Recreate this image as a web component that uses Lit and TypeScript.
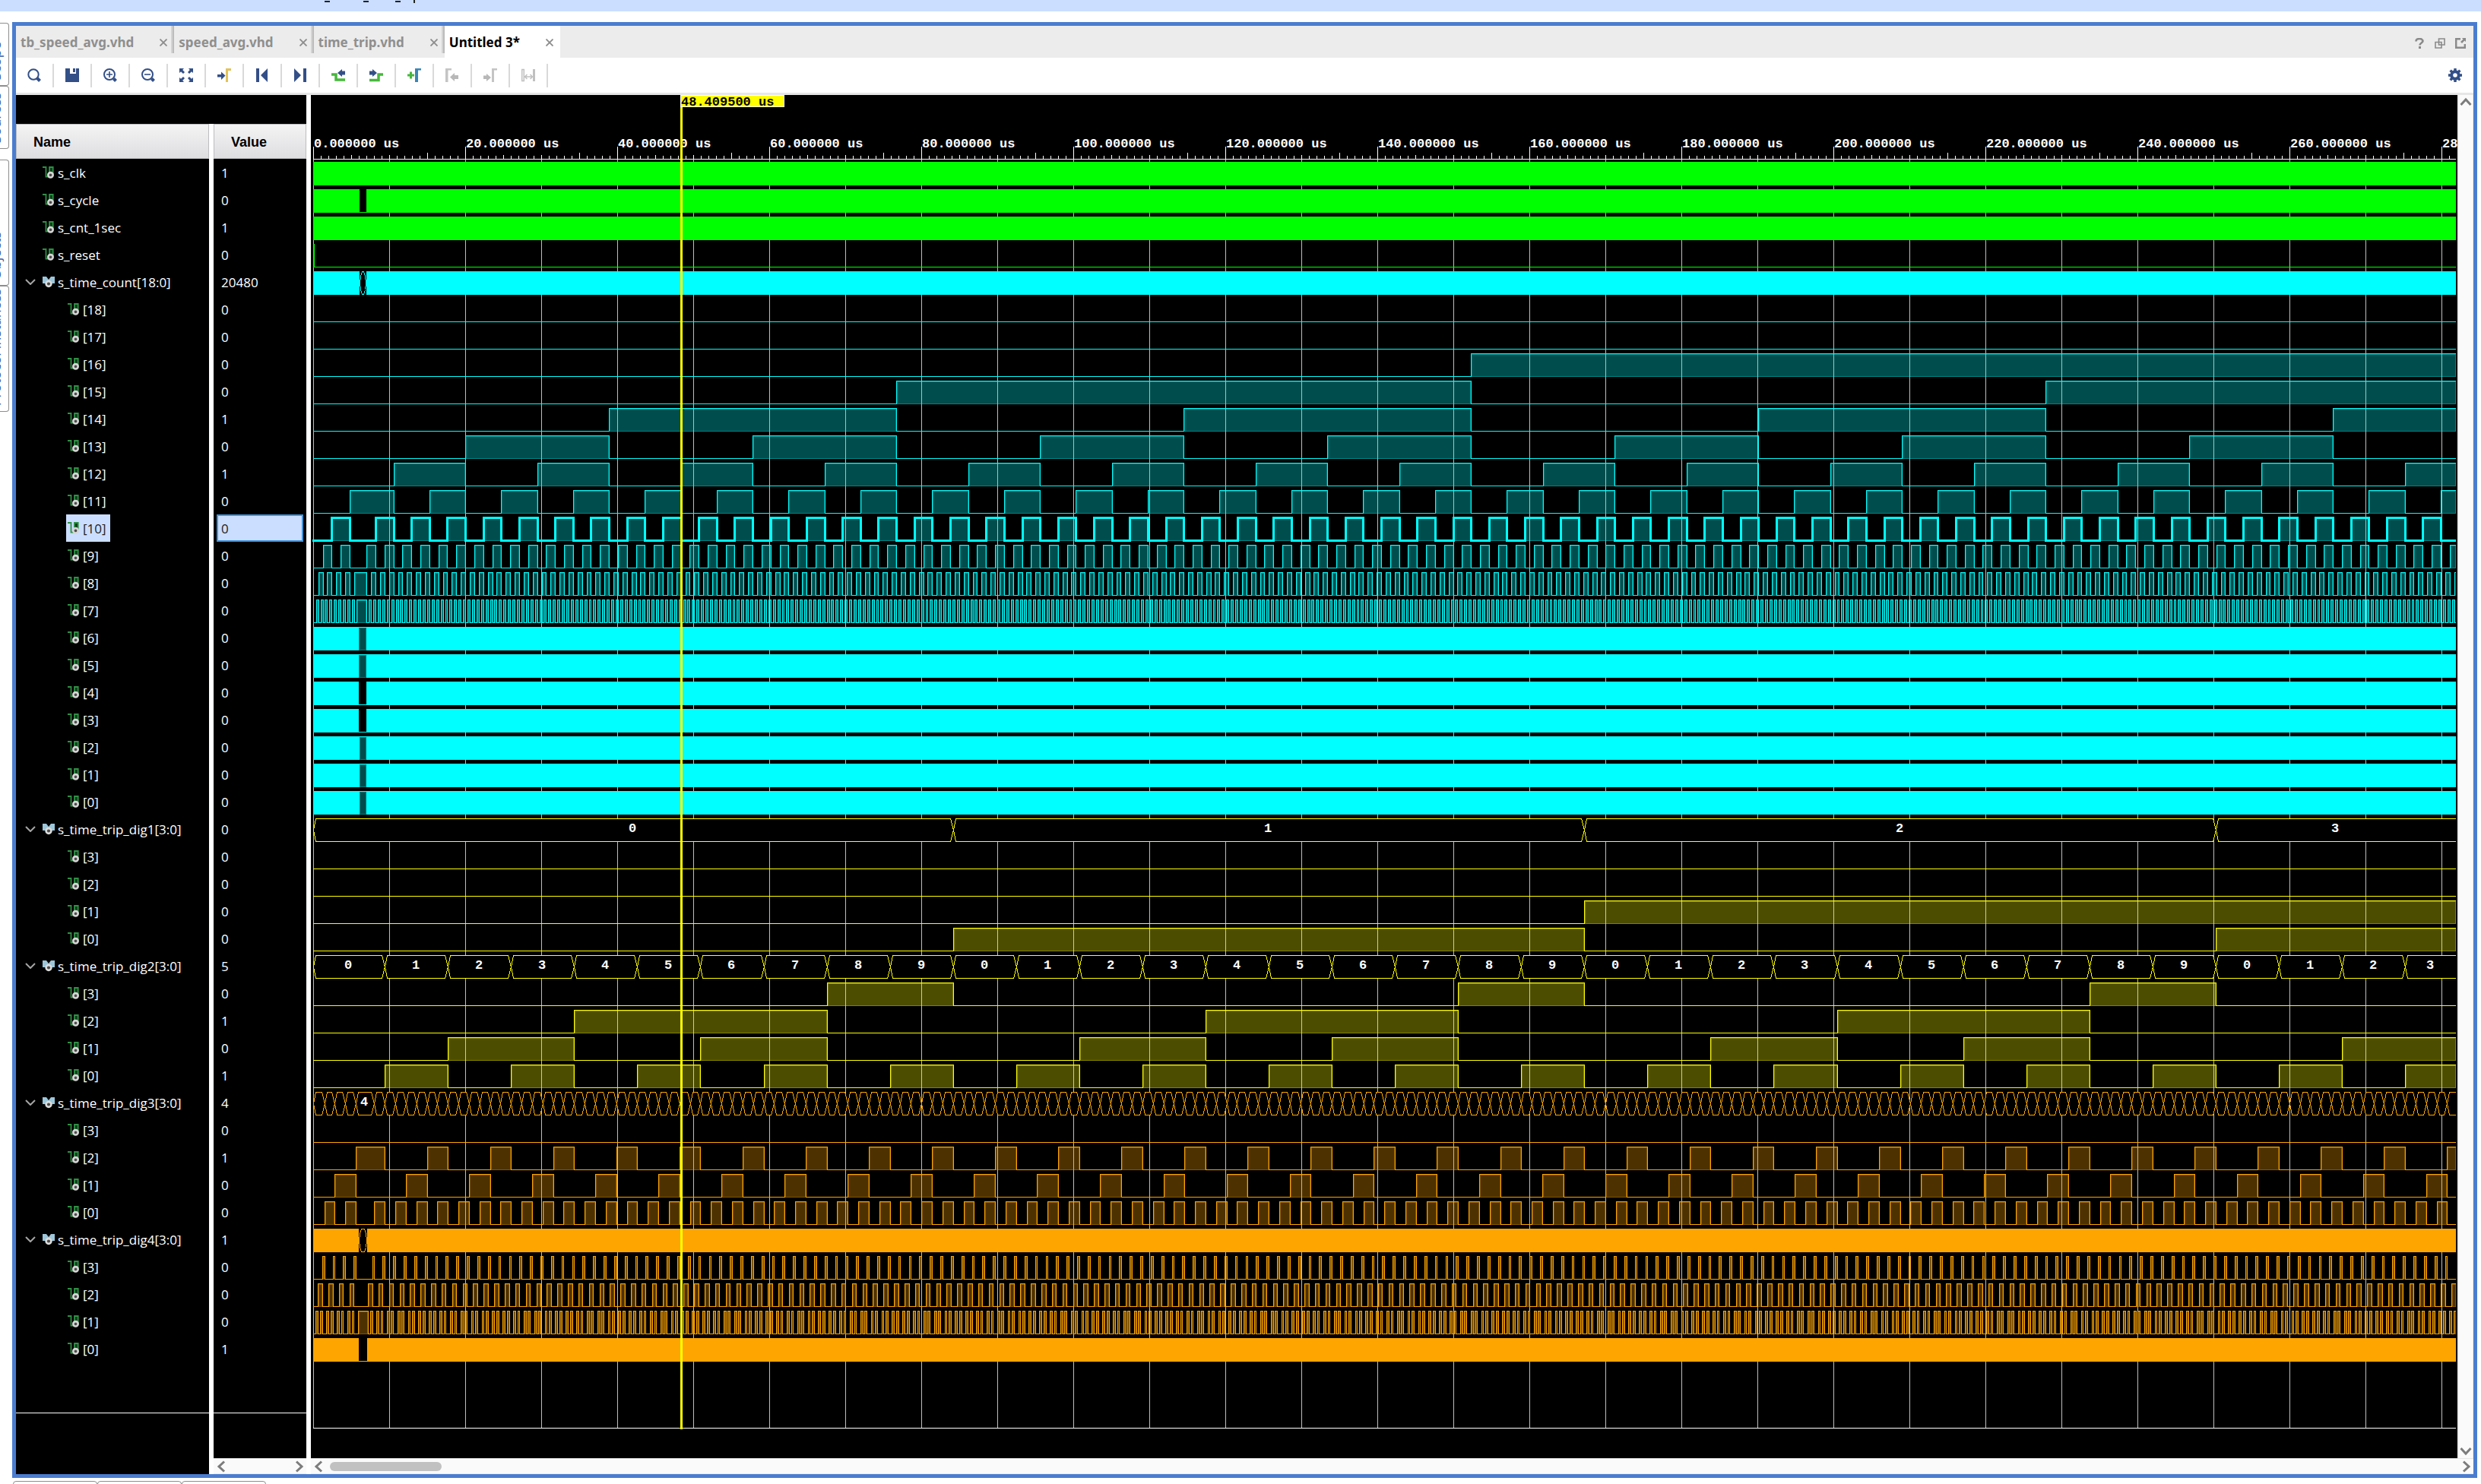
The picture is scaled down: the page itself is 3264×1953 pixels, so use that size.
import { LitElement, html, svg, css, nothing } from "lit";
import { customElement, state } from "lit/decorators.js";
import { classMap } from "lit/directives/class-map.js";

const GREEN = "#00ff00";
const CYAN = "#00ffff";
const YELLOW = "#ffff00";
const ORANGE = "#ffa500";

const ROW = 36;
const AXIS_Y = 84;
const PX_PER_US = 10;
const CURSOR_US = 48.4095;

/* The counter runs evenly except for one hold early in the simulation. */
const PX_PER_COUNT = 0.023072;
const HOLD_COUNT = 2535;
const xOf = (c: number) => (c <= HOLD_COUNT ? 1.2 : 11.6) + c * PX_PER_COUNT;

type Gap = { from: number; to: number; kind: "low" | "high" | "bus" };
type Wave =
  | { kind: "dense"; gap?: Gap }
  | { kind: "pulse"; step: number; high: (n: number) => boolean }
  | { kind: "reset" }
  | { kind: "bus"; step: number; base: number };

interface Signal {
  name: string;
  value: string;
  color: string;
  wave: Wave;
  child?: boolean;
  group?: boolean;
  selected?: boolean;
}

const gap = (from: number, to: number, kind: Gap["kind"]): Gap => ({ from, to, kind });
const bitOf = (step: number, base: number, bit: number): Wave => ({
  kind: "pulse",
  step,
  high: (n) => (((n % base) >> bit) & 1) === 1,
});

const CURSOR_COUNT = 20480;
const signals: Signal[] = [
  { name: "s_clk", value: "1", color: GREEN, wave: { kind: "dense" } },
  { name: "s_cycle", value: "0", color: GREEN, wave: { kind: "dense", gap: gap(61, 70, "low") } },
  { name: "s_cnt_1sec", value: "1", color: GREEN, wave: { kind: "dense" } },
  { name: "s_reset", value: "0", color: GREEN, wave: { kind: "reset" } },
  { name: "s_time_count[18:0]", value: "20480", color: CYAN, group: true, wave: { kind: "dense", gap: gap(61, 70, "bus") } },
];
for (let b = 18; b >= 0; b--) {
  const wave: Wave =
    b > 6
      ? { kind: "pulse", step: 2 ** b, high: (n) => n % 2 === 1 }
      : { kind: "dense", gap: gap(b > 2 ? 60 : 61, 70, b === 4 || b === 3 ? "low" : "high") };
  signals.push({
    name: `[${b}]`,
    value: String((CURSOR_COUNT >> b) & 1),
    color: CYAN,
    child: true,
    selected: b === 10,
    wave,
  });
}
const digits = [
  { id: 1, value: 0, color: YELLOW, step: 36000, base: 10 },
  { id: 2, value: 5, color: YELLOW, step: 3600, base: 10 },
  { id: 3, value: 4, color: ORANGE, step: 600, base: 6 },
  { id: 4, value: 1, color: ORANGE, step: 60, base: 10 },
];
for (const d of digits) {
  signals.push({
    name: `s_time_trip_dig${d.id}[3:0]`,
    value: String(d.value),
    color: d.color,
    group: true,
    wave: d.id === 4 ? { kind: "dense", gap: gap(60, 71, "bus") } : { kind: "bus", step: d.step, base: d.base },
  });
  for (let b = 3; b >= 0; b--) {
    signals.push({
      name: `[${b}]`,
      value: String((d.value >> b) & 1),
      color: d.color,
      child: true,
      wave: d.id === 4 && b === 0 ? { kind: "dense", gap: gap(60, 71, "low") } : bitOf(d.step, d.base, b),
    });
  }
}

const NAVY = "#334f87";
const icons = {
  search: svg`<circle cx="8" cy="8" r="6.7" fill="none" stroke=${NAVY} stroke-width="2"/><path d="M13 13l3.5 3.5" stroke=${NAVY} stroke-width="4"/>`,
  save: svg`<path d="M0 0h6v7h8V0h4v18H0z" fill=${NAVY}/><path d="M10 0h3v5h-3z" fill=${NAVY}/>`,
  zoomIn: svg`<circle cx="8" cy="8" r="7" fill="none" stroke=${NAVY} stroke-width="2"/><path d="M13.500 13.500l3 3" stroke=${NAVY} stroke-width="4"/><path d="M4 8h8M8 4v8" stroke=${NAVY} stroke-width="1.600"/>`,
  zoomOut: svg`<circle cx="8" cy="8" r="7" fill="none" stroke=${NAVY} stroke-width="2"/><path d="M13.500 13.500l3 3" stroke=${NAVY} stroke-width="4"/><path d="M4 8h8" stroke=${NAVY} stroke-width="1.600"/>`,
  fit: svg`<path d="M0 0h6L4.200 2 7 5 5 7 2 4.200 0 6zM18 0v6l-2-1.800L13 7l-2-2 2.800-3L12 0zM0 18v-6l2 1.800L5 11l2 2-2.800 3L6 18zM18 18h-6l1.800-2L11 13l2-2 3 2.800 2-1.800z" fill=${NAVY}/>`,
  goCursor: svg`<path d="M0 8h5V4.500l5.500 5L5 15v-3.500H0z" fill=${NAVY}/><path d="M11 18V0h7v3h-4v15z" fill="#e2c35c"/>`,
  first: svg`<path d="M1 0h4v18H1zM16 0v18L7 9z" fill=${NAVY}/>`,
  last: svg`<path d="M13 0h4v18h-4zM1 0v18l9-9z" fill=${NAVY}/>`,
  prevEdge: svg`<path d="M0 8h6v7h12" fill="none" stroke="#47b83c" stroke-width="3.500"/><path d="M18 3.500h-4V1L8 6l6 5V8.500h4z" fill=${NAVY}/>`,
  nextEdge: svg`<path d="M0 15.500h12V8h6" fill="none" stroke="#47b83c" stroke-width="3.500"/><path d="M0 3.500h4V1l6 5-6 5V8.500H0z" fill=${NAVY}/>`,
  addMarker: svg`<path d="M0 9h9M4.500 4.500v9" stroke="#47b83c" stroke-width="3"/><path d="M10 18V0h8v2.500h-4V18z" fill="#3a86b7"/>`,
  prevMarker: svg`<path d="M0 18V0h8v2.500H3.500V18z" fill="#c4c4c4"/><path d="M17 9h-5V6l-6 5.500 6 5.500v-3h5z" fill="#b8b8b8"/>`,
  nextMarker: svg`<path d="M11 18V0h7v2.500h-4V18z" fill="#c4c4c4"/><path d="M0 9.500h4V7l6 5-6 5v-3H0z" fill="#b8b8b8"/>`,
  swap: svg`<path d="M.7 1.500h2.600v15H.7zM5 11h9M7.500 8L4.500 11l3 3M11.500 8l3 3-3 3" fill="none" stroke="#c0c0c0" stroke-width="1.500"/><path d="M15 1h3v16h-3z" fill="#c0c0c0"/>`,
};

const tools: { label: string; icon: unknown; disabled?: boolean }[] = [
  { label: "Find", icon: icons.search },
  { label: "Save", icon: icons.save },
  { label: "Zoom in", icon: icons.zoomIn },
  { label: "Zoom out", icon: icons.zoomOut },
  { label: "Zoom fit", icon: icons.fit },
  { label: "Go to cursor", icon: icons.goCursor },
  { label: "Go to start", icon: icons.first },
  { label: "Go to end", icon: icons.last },
  { label: "Previous transition", icon: icons.prevEdge },
  { label: "Next transition", icon: icons.nextEdge },
  { label: "Add marker", icon: icons.addMarker },
  { label: "Previous marker", icon: icons.prevMarker, disabled: true },
  { label: "Next marker", icon: icons.nextMarker, disabled: true },
  { label: "Swap cursors", icon: icons.swap, disabled: true },
];

const arrow = (d: string) => html`<svg width="16" height="16" viewBox="0 0 16 16"><path d=${d} fill="none" stroke="#7c7c7c" stroke-width="3"/></svg>`;
const LEFT = "M11 1.500L4 8l7 6.500";
const RIGHT = "M6 1.500L13 8l-7 6.500";
const UP = "M1.500 12L8 5l6.500 7";
const DOWN = "M1.500 4L8 11l6.500-7";

@customElement("wave-canvas")
export class WaveCanvas extends LitElement {
  @state() private paneWidth = 2824;
  private observer?: ResizeObserver;

  static styles = css`
    :host {
      display: block;
      overflow: hidden;
      background: #000;
    }
    svg {
      display: block;
      width: 100%;
      height: 1793px;
    }
    text {
      font: bold 17px "Liberation Mono", monospace;
      fill: #fff;
    }
    text.on-cursor {
      fill: #000;
    }
  `;

  connectedCallback() {
    super.connectedCallback();
    this.observer = new ResizeObserver(([entry]) => {
      this.paneWidth = Math.round(entry.contentRect.width);
    });
    this.observer.observe(this);
  }

  disconnectedCallback() {
    super.disconnectedCallback();
    this.observer?.disconnect();
  }

  private drawDense(y: number, color: string, w: number, g?: Gap) {
    const top = y + 4;
    let hole: unknown = nothing;
    if (g) {
      const gw = g.to - g.from;
      const l = g.from + 0.5;
      const r = g.to - 0.5;
      if (g.kind === "low") {
        hole = svg`<rect x=${g.from} y=${top} width=${gw} height="30" fill="#000"/>`;
      } else if (g.kind === "high") {
        hole = svg`<rect x=${g.from} y=${top + 1} width=${gw} height="30" fill="#008080"/>
          <rect x=${g.from + 1} y=${top + 2} width=${gw - 2} height="28" fill="#004c4c"/>`;
      } else {
        hole = svg`<rect x=${g.from} y=${top} width=${gw} height="31" fill="#000"/>
          <path d="M${l} ${top + 15.5}L${l + 1} ${top + 6.5}L${l + 3} ${top + 0.5}H${r - 3}L${r - 1} ${top + 6.5}L${r} ${top + 15.5}L${r - 1} ${top + 24.5}L${r - 3} ${top + 30.5}H${l + 3}L${l + 1} ${top + 24.5}z" fill="none" stroke=${color}/>`;
      }
    }
    return svg`<rect x="0" y=${top} width=${w} height="31" fill=${color}/>${hole}`;
  }

  private drawPulse(y: number, color: string, w: number, step: number, high: (n: number) => boolean, selected: boolean) {
    const lo = y + 34.5;
    const hi = y + 4.5;
    let line = `M${selected ? -1 : 0} ${lo}`;
    let fill = "";
    let edge = "";
    let level = false;
    let rise = 0;
    const close = (end: number) => {
      const width = end - rise - 1;
      if (width > 0) fill += `M${rise + 1} ${y + 5}h${width}v30h${-width}z`;
      if (width > 1) edge += `M${rise + 1.5} ${y + 5.5}h${width - 1}v29h${1 - width}z`;
    };
    for (let n = 1; xOf(n * step) < w; n++) {
      const next = high(n);
      if (next === level) continue;
      const x = Math.floor(xOf(n * step));
      line += `H${x + 0.5}V${next ? hi : lo}`;
      if (next) rise = x;
      else close(x);
      level = next;
    }
    line += `H${w}`;
    if (level) close(w);
    return svg`<path d=${fill} fill=${color} fill-opacity="0.3"/>
      <path d=${edge} fill="none" stroke=${color} stroke-opacity="0.3"/>
      <path d=${line} fill="none" stroke=${color} stroke-width=${selected ? 3 : 1}/>`;
  }

  private drawBus(y: number, color: string, w: number, step: number, base: number) {
    let d = "";
    const labels: unknown[] = [];
    for (let n = 0; n === 0 || xOf(n * step) < w; n++) {
      const a = n === 0 ? 0 : Math.floor(xOf(n * step));
      const b = Math.floor(xOf((n + 1) * step));
      const end = b >= w ? w + 8 : b;
      d += `M${a + 0.5} ${y + 19.5}L${a + 3.5} ${y + 4.5}H${end - 3.5}L${end + 0.5} ${y + 19.5}L${end - 3.5} ${y + 34.5}H${a + 3.5}z`;
      const shown = Math.min(b, w);
      if (shown - a > 20) {
        labels.push(svg`<text x=${Math.round((a + shown) / 2) - 1} y=${y + 22} text-anchor="middle">${n % base}</text>`);
      }
    }
    return svg`<path d=${d} fill="#000" stroke=${color}/>${labels}`;
  }

  private drawSignal(s: Signal, i: number, w: number) {
    const y = AXIS_Y + i * ROW;
    const k = s.wave;
    if (k.kind === "dense") return this.drawDense(y, s.color, w, k.gap);
    if (k.kind === "bus") return this.drawBus(y, s.color, w, k.step, k.base);
    if (k.kind === "reset") return svg`<path d="M1 ${y + 4}V${y + 34}" stroke=${s.color} stroke-width="2"/><path d="M0 ${y + 34.5}H${w}" stroke=${s.color}/>`;
    return this.drawPulse(y, s.color, w, k.step, k.high, !!s.selected);
  }

  render() {
    const w = this.paneWidth - 5;
    const bottom = 1754;
    let grid = "";
    let ticks = "";
    const labels: unknown[] = [];
    for (let x = 0; x < w; x += 10) {
      const phase = x % 200;
      const len = phase === 0 ? 16 : phase === 150 ? 8 : phase % 50 === 0 ? 5 : 4;
      ticks += `M${x + 0.5} ${AXIS_Y}v${-len}`;
      if (x % 100 === 0) grid += `M${x + 0.5} ${AXIS_Y + 1}V${bottom}`;
      if (phase === 0) labels.push(svg`<text x=${x + 1} y="69">${(x / PX_PER_US).toFixed(6)} us</text>`);
    }
    const cursor = Math.floor(CURSOR_US * PX_PER_US);
    return html`
      <svg>
        <defs><clipPath id="pane"><rect x="-2" y="0" width=${w + 2} height="1793"/></clipPath></defs>
        <g transform="translate(3 0)" shape-rendering="crispEdges">
          <path d=${grid} stroke="#bebebe"/>
          <path d=${ticks} stroke="#fff"/>
          <path d="M0 ${AXIS_Y + 0.5}H${w}M0 ${bottom + 0.5}H${w}" stroke="#fff"/>
          ${labels}
          <g clip-path="url(#pane)">${signals.map((s, i) => this.drawSignal(s, i, w))}</g>
          <rect x=${cursor - 1} y="0" width="3" height="1756" fill="#ffff00"/>
          <rect x=${cursor - 0.5} y="0.5" width="136" height="15" fill="#ffff00" stroke="#fff"/>
          <text class="on-cursor" x=${cursor} y="14">${CURSOR_US.toFixed(6)} us</text>
        </g>
      </svg>
    `;
  }
}

@customElement("app-root")
export class AppRoot extends LitElement {
  static styles = css`
    :host {
      display: flex;
      flex-direction: column;
      min-height: 100vh;
      box-sizing: border-box;
      overflow: hidden;
      background: #fff;
      color: #000;
      font: 18px/24px "Open Sans", "Noto Sans", sans-serif;
    }
    * {
      box-sizing: border-box;
    }
    button {
      margin: 0;
      padding: 0;
      border: 0;
      background: none;
      font: inherit;
      color: inherit;
      display: flex;
      align-items: center;
      justify-content: center;
    }
    svg {
      display: block;
      flex: none;
    }
    .title-strip {
      height: 15px;
      margin-bottom: 14px;
      background: #cbdeff;
    }
    .body {
      flex: 1;
      display: flex;
      padding-right: 5px;
    }
    .side {
      width: 16px;
      flex: none;
      display: flex;
      flex-direction: column;
      padding-top: 1px;
    }
    .side-tab {
      width: 12px;
      height: 83px;
      padding-bottom: 7px;
      border: 1px solid #8e8e8e;
      border-left: 0;
      border-radius: 0 4px 4px 0;
      align-items: flex-end;
      justify-content: flex-end;
      overflow: hidden;
      color: #3f5fa6;
    }
    .side-tab.spaced {
      margin-top: 14px;
    }
    .side-tab.long {
      height: 166px;
    }
    .side-tab span {
      writing-mode: vertical-rl;
      transform: rotate(180deg);
      margin-right: 5px;
      white-space: nowrap;
    }
    .window {
      flex: 1;
      min-width: 0;
      display: flex;
      flex-direction: column;
      border: 5px solid #4a7dcf;
    }
    .tabs {
      display: flex;
      height: 42px;
      background: #ececec;
    }
    .tab {
      display: flex;
      align-items: center;
      justify-content: space-between;
      gap: 34px;
      padding: 2px 5px 0 6px;
      color: #8f8f8f;
    }
    .tab-wrap {
      display: flex;
    }
    .tab-wrap::after {
      content: "";
      width: 4px;
      height: 36px;
      background: linear-gradient(90deg, #d4d4d4 50%, #bcbcbc 50%);
    }
    .tab-wrap.active::after {
      display: none;
    }
    .active .tab {
      padding-right: 9px;
      background: #fff;
      color: #000;
    }
    .tab-name {
      font: bold 17px/24px "Noto Sans", "Open Sans", sans-serif;
    }
    .window-tools {
      margin-left: auto;
      display: flex;
      align-items: center;
      gap: 13px;
      padding: 4px 10px 0 0;
    }
    .toolbar {
      display: flex;
      align-items: center;
      height: 49px;
      border-bottom: 3px solid #e6e6e6;
      background: #fff;
    }
    .tool {
      width: 50px;
      height: 31px;
      border-right: 2px solid #d9d9d9;
    }
    .gear {
      margin: 0 15px 0 auto;
    }
    .panes {
      flex: 1;
      display: flex;
      background: #fff;
    }
    .list {
      width: 382px;
      flex: none;
      display: flex;
      flex-direction: column;
      margin-right: 6px;
      color: #fff;
    }
    .band {
      height: 38px;
      background: #000;
    }
    table {
      width: 382px;
      table-layout: fixed;
      border-collapse: separate;
      border-spacing: 0;
    }
    .name-col {
      width: 254px;
    }
    th {
      height: 46px;
      padding: 2px 0 0 22px;
      border: 1px solid #bdbdc0;
      background: linear-gradient(#f4f4f4, #dedee1);
      color: #000;
      text-align: left;
      font: bold 18px/24px "Liberation Sans", Arial, sans-serif;
    }
    .cols {
      display: grid;
      grid-template-columns: 254px 122px;
      column-gap: 6px;
    }
    td {
      height: 36px;
      padding: 0;
      background: #000;
    }
    .split {
      width: 6px;
      background: #fff;
    }
    .item {
      display: flex;
      align-items: center;
      height: 36px;
    }
    .twist {
      width: 35px;
      height: 36px;
      padding-left: 2px;
    }
    .tag {
      display: flex;
      align-items: center;
      gap: 4px;
      height: 36px;
    }
    .plain {
      padding-left: 35px;
    }
    .child {
      padding-left: 66px;
    }
    .child .tag {
      padding: 0 5px 0 2px;
    }
    .child.selected .tag {
      background: #cbdeff;
      color: #222;
    }
    .label,
    .value {
      padding-top: 2px;
      font: 17px/24px "Open Sans", "Noto Sans", sans-serif;
      white-space: nowrap;
    }
    .value {
      display: flex;
      align-items: center;
      height: 36px;
      margin: 0 4px;
      padding-left: 6px;
    }
    .value.selected {
      padding-left: 4px;
      border: 2px solid #4394d8;
      background: #cbdeff;
      color: #222;
    }
    .rest {
      height: 67px;
    }
    .rest > div {
      background: #000;
      border-bottom: 1px solid #fff;
    }
    .fill {
      flex: 1;
    }
    .fill > div {
      background: #000;
    }
    .foot {
      height: 21px;
    }
    .black {
      background: #000;
    }
    .hbar {
      display: flex;
      align-items: center;
      height: 21px;
      padding: 0 2px;
      background: #fafafa;
      border-top: 1px solid #e6e6e6;
      border-bottom: 1px solid #ececec;
    }
    .hbar button,
    .vbar button {
      width: 18px;
      height: 18px;
    }
    .hbar .end {
      margin-left: auto;
    }
    .thumb {
      width: 147px;
      height: 12px;
      margin-left: 5px;
      border-radius: 6px;
      background: #c1c1c1;
    }
    .scope {
      flex: 1;
      min-width: 0;
      display: flex;
      flex-direction: column;
    }
    .view {
      flex: 1;
      display: flex;
    }
    wave-canvas {
      flex: 1;
      min-width: 0;
    }
    .vbar {
      width: 21px;
      flex: none;
      display: flex;
      flex-direction: column;
      align-items: center;
      justify-content: space-between;
      background: #fafafa;
      border-left: 2px solid #ececec;
      border-right: 1px solid #ececec;
    }
    .bottom-tabs {
      display: flex;
      height: 8px;
      padding: 4px 0 0 17px;
      overflow: hidden;
    }
    .bottom-tab {
      width: 111px;
      height: 24px;
      border: 1px solid #8e8e8e;
      border-radius: 4px 4px 0 0;
    }
  `;

  private bitIcon = () => html`<svg width="16" height="18" viewBox="0 0 16 18" aria-hidden="true">
    <path d="M8.500 2h5v9h-5z" fill="#0f3d1a"/>
    <path d="M0 2h4.500v12.500H9V2h4.700v9" fill="none" stroke="#2f9044" stroke-width="1.800"/>
    <circle cx="10.500" cy="12.300" r="3.200" fill="#4c4c4c" stroke="#d6d6d6" stroke-width="2.600"/>
  </svg>`;

  private groupIcon = () => html`<svg width="16" height="18" viewBox="0 0 16 18" aria-hidden="true">
    <path d="M0 2h5l3 4 3-4h5v9h-5l-3 2-3-2H0z" fill="#9cc6da"/>
    <circle cx="8" cy="11.500" r="3.400" fill="#4c4c4c" stroke="#dcdcdc" stroke-width="2.600"/>
  </svg>`;

  private row(s: Signal) {
    const cls = { item: true, child: !!s.child, plain: !s.child && !s.group, selected: !!s.selected };
    return html`<tr>
      <td>
        <div class=${classMap(cls)}>
          ${s.group
            ? html`<button class="twist" aria-label="Collapse" aria-expanded="true">
                <svg width="14" height="8" viewBox="0 0 14 8"><path d="M1 1l6 6 6-6" fill="none" stroke="#a6a6a6" stroke-width="2"/></svg>
              </button>`
            : nothing}
          <span class="tag">${s.group ? this.groupIcon() : this.bitIcon()}<span class="label">${s.name}</span></span>
        </div>
      </td>
      <td class="split"></td>
      <td><div class=${classMap({ value: true, selected: !!s.selected })}>${s.value}</div></td>
    </tr>`;
  }

  render() {
    const files = ["tb_speed_avg.vhd", "speed_avg.vhd", "time_trip.vhd", "Untitled 3*"];
    return html`
      <header class="title-strip">
        <svg width="560" height="4" viewBox="0 0 560 4"><path d="M427 1h7v2h-7zM478 1h7v2h-7zM520 1h7v2h-7zM544 0h2v4h-2z" fill="#222"/></svg>
      </header>
      <div class="body">
        <nav class="side">
          <button class="side-tab"><span>Scope</span></button>
          <button class="side-tab"><span>Sources</span></button>
          <button class="side-tab spaced long"><span>Objects</span></button>
          <button class="side-tab long"><span>Protocol Instances</span></button>
        </nav>
        <main class="window">
          <div class="tabs">
            ${files.map((f, i) => html`<div class=${classMap({ "tab-wrap": true, active: i === 3 })}>
              <div class="tab">
                <button class="tab-name">${f}</button>
                <button aria-label="Close"><svg width="10" height="10" viewBox="0 0 10 10"><path d="M.5 .5l9 9M9.500 .5l-9 9" stroke="#8c8c8c" stroke-width="1.800"/></svg></button>
              </div>
            </div>`)}
            <div class="window-tools">
              <button aria-label="Help"><svg width="14" height="14" viewBox="0 0 14 14"><path d="M2.500 4.500C2.500 0 11.500 0 11.500 4c0 2.500-4 2.500-4 5.500" fill="none" stroke="#8a8a8a" stroke-width="2.600"/><path d="M6 11h3v3H6z" fill="#8a8a8a"/></svg></button>
              <button aria-label="Restore"><svg width="14" height="14" viewBox="0 0 14 14"><path d="M5.500 1h7.500v8H5.500zM1 5.500h8V13H1z" fill="none" stroke="#8a8a8a" stroke-width="1.600"/></svg></button>
              <button aria-label="Float"><svg width="14" height="14" viewBox="0 0 14 14"><path d="M7 1.200H1.200v11.600h11.600V8" fill="none" stroke="#8a8a8a" stroke-width="2.400"/><path d="M9 0h5v5l-1.700-1.600L9 7 7 5l3.500-3.300z" fill="#8a8a8a"/></svg></button>
            </div>
          </div>
          <div class="toolbar">
            ${tools.map((t) => html`<button class="tool" aria-label=${t.label} ?disabled=${t.disabled}><svg width="18" height="18" viewBox="0 0 18 18">${t.icon}</svg></button>`)}
            <button class="gear" aria-label="Settings"><svg width="18" height="18" viewBox="0 0 18 18">
              <circle cx="9" cy="9" r="4.800" fill="none" stroke=${NAVY} stroke-width="4"/>
              <path d="M9 0v3M9 15v3M0 9h3M15 9h3M2.600 2.600l2.200 2.200M13.200 13.200l2.200 2.200M2.600 15.400l2.200-2.200M13.200 4.800l2.200-2.200" stroke=${NAVY} stroke-width="3.400"/>
            </svg></button>
          </div>
          <div class="panes">
            <section class="list">
              <div class="band"></div>
              <table>
                <colgroup><col class="name-col"><col class="split"><col></colgroup>
                <thead><tr><th>Name</th><td class="split"></td><th>Value</th></tr></thead>
                <tbody>${signals.map((s) => this.row(s))}</tbody>
              </table>
              <div class="cols rest"><div></div><div></div></div>
              <div class="cols fill"><div></div><div></div></div>
              <div class="cols foot">
                <div class="black"></div>
                <div class="hbar">
                  <button aria-label="Scroll left">${arrow(LEFT)}</button>
                  <button class="end" aria-label="Scroll right">${arrow(RIGHT)}</button>
                </div>
              </div>
            </section>
            <section class="scope">
              <div class="view">
                <wave-canvas></wave-canvas>
                <div class="vbar">
                  <button aria-label="Scroll up">${arrow(UP)}</button>
                  <button aria-label="Scroll down">${arrow(DOWN)}</button>
                </div>
              </div>
              <div class="hbar">
                <button aria-label="Scroll left">${arrow(LEFT)}</button>
                <div class="thumb"></div>
                <button class="end" aria-label="Scroll right">${arrow(RIGHT)}</button>
              </div>
            </section>
          </div>
        </main>
      </div>
      <footer class="bottom-tabs">
        <div class="bottom-tab"></div><div class="bottom-tab"></div><div class="bottom-tab"></div>
      </footer>
    `;
  }
}
